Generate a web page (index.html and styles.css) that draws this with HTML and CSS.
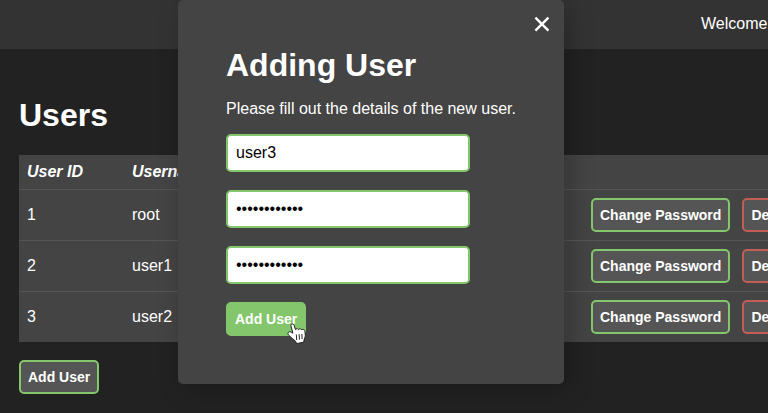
FILE: index.html
```html
<!DOCTYPE html>
<html lang="en">
<head>
<meta charset="utf-8">
<title>Users</title>
<link rel="stylesheet" href="styles.css">
</head>
<body>
<nav class="topbar"><span class="welcome">Welcome</span></nav>
<main class="content">
  <h1>Users</h1>
  <div class="table">
    <div class="row head"><span>User ID</span><span>Username</span></div>
    <div class="row"><span>1</span><span>root</span><div class="actions"><button class="btn">Change Password</button><button class="btn danger">Delete</button></div></div>
    <div class="row"><span>2</span><span>user1</span><div class="actions"><button class="btn">Change Password</button><button class="btn danger">Delete</button></div></div>
    <div class="row"><span>3</span><span>user2</span><div class="actions"><button class="btn">Change Password</button><button class="btn danger">Delete</button></div></div>
  </div>
  <button class="btn add">Add User</button>
</main>
<section class="modal">
  <button class="close" aria-label="Close"><svg width="16" height="16" viewBox="0 0 16 16"><path d="M1.4 1.7 14.4 14.6M14.4 1.7 1.4 14.6" stroke="#fff" stroke-width="2.4" fill="none"/></svg></button>
  <h1>Adding User</h1>
  <p>Please fill out the details of the new user.</p>
  <form class="form">
    <input type="text" value="user3">
    <input type="password" value="abcdefghijkl">
    <input type="password" value="abcdefghijkl">
    <button type="button" class="btn active">Add User</button>
  </form>
</section>
<svg class="cursor" width="20" height="22" viewBox="0 0 20 22"><path d="M4.8 1C6.200.7 7 1.500 7.300 2.800L8.500 6.600C9.500 5.500 10.800 5.600 11.400 6.500 12.600 5.400 14 5.700 14.600 6.700 16.200 6 17.600 6.800 17.900 8.300L18.300 12.200C18.300 14.400 17.300 15.500 17 17L16.900 19 9.500 20.700 8.800 18.500C6.500 16.800 4.200 14.400 1.500 12 0 10 1.800 8 4.100 9.100L5.900 10.200 4 3.100C3.700 2.100 4 1.300 4.800 1Z" fill="#fff" stroke="#222" stroke-width="1"/><path d="M9.300 11.500 9.700 17M12.100 11.200 12.500 16.600M14.900 11 15.100 16" stroke="#222" fill="none"/></svg>
</body>
</html>
```
FILE: styles.css
```css
* { box-sizing: border-box; }
body {
  margin: 0;
  height: 413px;
  overflow: hidden;
  background: #222;
  color: #fff;
  font: 16px/18px "Liberation Sans", Arial, sans-serif;
}
h1 { margin: 0; font-size: 32px; line-height: 36px; }
.topbar {
  height: 49px;
  padding: 15px 0 0 701px;
  background: #333;
  white-space: nowrap;
}
.content { width: 900px; padding: 48px 0 0 19px; }
.table { margin: 22px 0 18px; background: #444; }
.row {
  display: grid;
  grid-template-columns: 105px 459px auto;
  align-items: center;
  height: 51px;
  padding-left: 8px;
  border-top: 1px solid #555;
}
.head { height: 34px; border-top: 0; font-weight: bold; font-style: italic; }
.actions { display: flex; gap: 12px; }
.btn {
  height: 34px;
  padding: 0 7px;
  border: 2px solid #83c66b;
  border-radius: 5px;
  background: #555;
  color: #fff;
  font: bold 14px/16px "Liberation Sans", Arial, sans-serif;
}
.btn.danger { border-color: #c15e56; }
.btn.active { background: #83c66b; }
.add { display: block; }
.modal {
  position: absolute;
  top: 0;
  left: 178px;
  width: 386px;
  height: 384px;
  padding: 47px 48px;
  border-radius: 5px;
  background: #444;
  box-shadow: 5px 5px 25px rgba(0, 0, 0, .25);
}
.modal p { margin: 17px 0 16px; white-space: nowrap; }
.form { display: flex; flex-direction: column; align-items: flex-start; gap: 18px; }
.form input {
  width: 244px;
  height: 38px;
  padding: 0 8px;
  border: 2px solid #83c66b;
  border-radius: 5px;
  outline: 0;
  background: #fff;
  color: #000;
  font: 16px "Liberation Sans", Arial, sans-serif;
}
.close {
  position: absolute;
  top: 16px;
  right: 14px;
  padding: 0;
  border: 0;
  background: none;
  line-height: 0;
}
.cursor { position: absolute; left: 287px; top: 323px; }
```
